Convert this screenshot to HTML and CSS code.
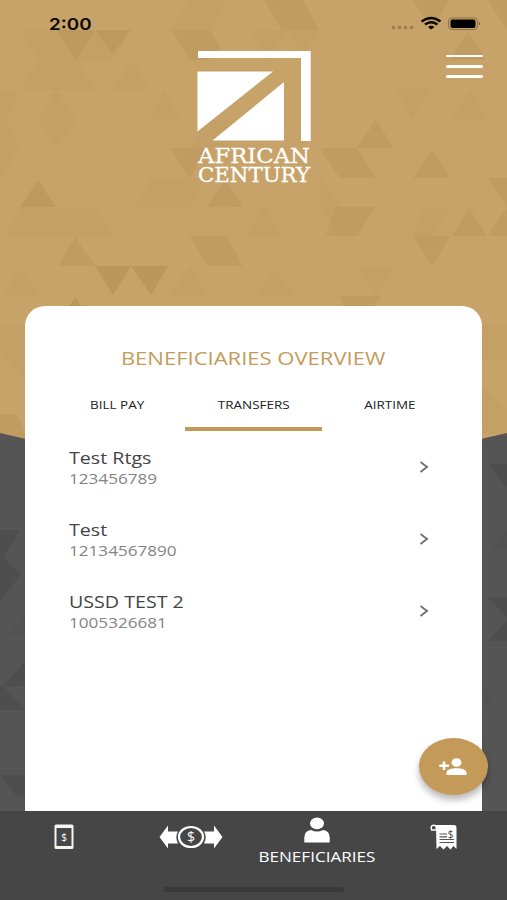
FILE: index.html
```html
<!DOCTYPE html>
<html lang="en">
<head>
<meta charset="utf-8">
<title>Beneficiaries</title>
<link rel="stylesheet" href="styles.css">
</head>
<body>
<div class="app">
  <svg class="backdrop" viewBox="0 0 507 900" aria-hidden="true">
    <path fill="#555" d="M0 0H507V900H0z"/>
    <path fill="#c7a269" d="M0 0H507V433Q253.500 495 0 433z"/>
    <g fill="#a8864a" fill-opacity=".09">
      <path d="M20 30H132L112 60H38zM38 60H76L95 90H20zM0 90H20L5 120L20 148L0 178z"/>
      <path d="M190 0H225L210 30H170zM38 120L56 90L76 120L57 148zM165 90L180 120H150z"/>
      <path d="M250 30H287L268 60zM290 30H318L303 58zM395 88H430L412 119zM470 90L487 120H453z"/>
      <path d="M20 207L38 182L56 207H95L113 236H5zM152 178H205L190 207H135z"/>
      <path d="M320 178L340 207H375L357 236H340L321 207zM425 207H452L432 236H413z"/>
      <path d="M20 268L40 296H3zM190 266L207 296H170zM275 268L294 296H257zM357 266H395L376 296z"/>
      <path d="M0 325H25V380L0 350zM482 325H507V360H482zM482 385L507 410V433H482z"/>
      <path d="M207 120H246L225 148H190zM264 207L282 236H246zM132 60L150 90H113z"/>
    </g>
    <g fill="#a8864a" fill-opacity=".22">
      <path d="M264 0H303L319 30H282zM413 0H450L432 29zM488 0H507V29z"/>
      <path d="M57 30H95L76 60zM95 30H130L113 54zM172 30H210L220 48L208 60H190zM468 32L486 60H450z"/>
      <path d="M376 120L394 148H357zM170 148H207L190 178zM320 148H357L375 178H340zM432 149L450 178H413z"/>
      <path d="M38 180L56 207H20zM225 179L243 207H207zM488 178H507V207zM469 208L487 236H452zM507 207V236H488z"/>
      <path d="M75 237L95 266H58zM190 236H226L243 266H207zM413 236H450L432 266z"/>
      <path d="M0 414H16L26 432V439L0 433zM340 296H382L372 308H345z"/>
    </g>
    <path fill="#a8864a" fill-opacity=".12" d="M335 207H375L358 236H325z"/>
    <path fill="#a8864a" fill-opacity=".4" d="M95 266H131L113 295zM131 266H168L151 295zM75 297L82 308H68z"/>
    <g fill="#484848" fill-opacity=".45">
      <path d="M0 530H20L4 557L21 574L0 602zM26 660V686H3zM3 686L25 710H0V686zM0 775H25V795L18 798z"/>
      <path d="M488 464H507V488zM488 597H507V618zM507 620V641H488z"/>
      <path fill-opacity=".2" d="M25 615V635H8zM507 530V550H490zM484 686L494 706H484z"/>
    </g>
  </svg>

  <header class="header">
    <div class="status">
      <span class="clock">2:00</span>
      <svg class="status-icons" viewBox="0 0 92 18" aria-hidden="true">
        <g fill="#9c7d4e"><circle cx="4.500" cy="12.500" r="1.800"/><circle cx="10.500" cy="12.500" r="1.800"/><circle cx="16.500" cy="12.500" r="1.800"/><circle cx="22.500" cy="12.500" r="1.800"/></g>
        <g fill="none" stroke="#0b0905" stroke-width="2.400">
          <path d="M32.500 6.500Q42.500-.6 51.500 6.500"/><path d="M36 9.500Q42 5 48.500 9.500"/>
        </g>
        <path fill="#0b0905" d="M39 12Q42 9.600 45.500 12L42.200 14.500z"/>
        <rect x="59.500" y="3" width="29" height="11.500" rx="3.500" fill="none" stroke="#8e7146"/>
        <rect x="61.500" y="4.500" width="25" height="8.500" rx="2"/>
        <path fill="#6b5432" d="M90 7Q92 8.700 90 10.500z"/>
      </svg>
    </div>
    <div class="brand-row">
      <div class="brand">
        <svg class="brand-mark" viewBox="0 0 114 90" aria-hidden="true">
          <path fill="#fff" d="M1 0H113.700V90H104V7H1zM.5 20.500H76L.5 80.500zM87 31V89.500H15.500z"/>
        </svg>
        <svg class="brand-name" viewBox="0 0 114 40">
          <text x="1" y="20" textLength="112" lengthAdjust="spacingAndGlyphs">AFRICAN</text>
          <text x="1" y="38.500" textLength="112" lengthAdjust="spacingAndGlyphs">CENTURY</text>
        </svg>
      </div>
      <div class="menu"><i></i><i></i><i></i></div>
    </div>
  </header>

  <main class="card">
    <h1 class="title"><span>BENEFICIARIES OVERVIEW</span></h1>
    <nav class="tabs">
      <a class="tab"><span>BILL PAY</span></a>
      <a class="tab active"><span>TRANSFERS</span></a>
      <a class="tab"><span>AIRTIME</span></a>
    </nav>
    <ul class="list">
      <li class="item">
        <div class="info"><span class="name">Test Rtgs</span><span class="number">123456789</span></div>
        <svg class="chevron" viewBox="0 0 10 12"><path d="M1.500 1L8 6L1.500 11"/></svg>
      </li>
      <li class="item">
        <div class="info"><span class="name">Test</span><span class="number">12134567890</span></div>
        <svg class="chevron" viewBox="0 0 10 12"><path d="M1.500 1L8 6L1.500 11"/></svg>
      </li>
      <li class="item">
        <div class="info"><span class="name">USSD TEST 2</span><span class="number">1005326681</span></div>
        <svg class="chevron" viewBox="0 0 10 12"><path d="M1.500 1L8 6L1.500 11"/></svg>
      </li>
    </ul>
  </main>

  <button class="fab" aria-label="Add beneficiary">
    <svg viewBox="0 0 28 18"><g fill="#fff"><ellipse cx="17.500" cy="4.500" rx="5" ry="4.300"/><path d="M7.500 17V14.500C7.500 8.800 27.500 8.800 27.500 14.500V17zM3.800 3.500H6.300V6.600H10V8.900H6.300V12H3.800V8.900H.3V6.600H3.800z"/></g></svg>
  </button>

  <footer class="bottom">
    <a class="nav-item">
      <svg class="icon-bill" viewBox="0 0 20 26"><path fill="#f4f4f4" fill-rule="evenodd" d="M2 .5H18Q19.500.5 19.500 2V23.500Q19.500 25 18 25H2Q.5 25 .5 23.500V2Q.5.5 2 .5zM2.500 4V22H17.500V4z"/><text x="10" y="16.500" font-size="10">$</text></svg>
    </a>
    <a class="nav-item">
      <svg class="icon-transfer" viewBox="0 0 64 24"><g fill="#fff"><path d="M.5 12L9 .5V6.500H19Q15.500 12 19 18.500H9V23.500zM63.500 12L55 .5V6.500H45Q48.500 12 45 18.500H55V23.500z"/></g><ellipse cx="32" cy="12" rx="12" ry="10" fill="none" stroke="#fff" stroke-width="2.200"/><text x="32" y="17" font-size="14">$</text></svg>
    </a>
    <a class="nav-item selected">
      <svg class="icon-person" viewBox="0 0 26 26"><g fill="#fff"><ellipse cx="13" cy="6.300" rx="7" ry="5.900"/><path d="M.3 25.500V20.500Q.5 13.500 7 13Q13 16 19 13Q25.500 13.500 25.700 20.500V25.500z"/></g></svg>
      <span>BENEFICIARIES</span>
    </a>
    <a class="nav-item">
      <svg class="icon-receipt" viewBox="0 0 28 26"><path fill="#fff" d="M6 1H24Q26.500 1 26.500 4V25L23.500 22L20.500 25.500L17 22L13.500 25.500L10 22L6.500 25z"/><path d="M6.500 6H1.700Q0 1.200 4 1.200Q6.500 1.200 6.500 6z" fill="none" stroke="#fff" stroke-width="1.500"/><path d="M9.500 10H17M9.500 12.800H17M9.500 15.500H24M9.500 18.500H24" stroke="#555" stroke-width="1.200"/><text class="ink" x="20.700" y="13.500" font-size="10">$</text></svg>
    </a>
    <div class="home-indicator"></div>
  </footer>
</div>
</body>
</html>
```

FILE: styles.css
```css
* { box-sizing: border-box; }
body { margin: 0; font-family: "Open Sans", "Noto Sans", sans-serif; }
.app {
  position: relative;
  display: flex;
  flex-direction: column;
  width: 507px;
  height: 900px;
  overflow: hidden;
}
.backdrop { position: absolute; inset: 0; width: 507px; height: 900px; }

.header { position: relative; height: 306px; }
.status {
  display: flex;
  justify-content: space-between;
  align-items: flex-start;
  height: 51px;
  padding: 14px 26px 0 49px;
}
.clock {
  font: 600 16.500px/20px Inter, sans-serif;
  transform: scaleX(1.14);
  transform-origin: left;
  color: #0b0905;
}
.status-icons { width: 92px; height: 18px; margin-top: 1px; }
.brand-row {
  display: grid;
  grid-template-columns: 1fr 114px 1fr;
  padding-right: 24px;
  padding-left: 24px;
}
.brand { grid-column: 2; display: flex; flex-direction: column; width: 114px; }
.brand-mark { width: 114px; height: 90px; }
.brand-name { width: 114px; height: 40px; margin-top: 2px; overflow: visible; }
.brand-name text {
  fill: #fff;
  stroke: #fff;
  stroke-width: .3;
  font: 19.500px "DejaVu Serif", serif;
}
.menu {
  justify-self: end;
  display: flex;
  flex-direction: column;
  gap: 7.500px;
  width: 37px;
  padding-top: 3.500px;
}
.menu i { height: 2.800px; border-radius: 2px; background: #fff; }

.card {
  position: relative;
  height: 505px;
  margin: 0 25px;
  padding: 38px 24px 0;
  border-radius: 20px 20px 0 0;
  background: #fff;
}
.title {
  margin: 0;
  text-align: center;
  font-size: 18.500px;
  font-weight: 400;
  line-height: 28px;
  color: #c59b5a;
}
.title span { display: inline-block; transform: scaleX(1.19); }
.tabs { display: grid; grid-template-columns: repeat(3, 1fr); margin-top: 12px; }
.tab {
  height: 47px;
  padding-top: 11px;
  border-bottom: 4px solid transparent;
  text-align: center;
  font-size: 11.500px;
  line-height: 20px;
  color: #222;
}
.tab span { display: inline-block; transform: scaleX(1.17); }
.tab.active { border-color: #c39a5a; }
.list { margin: 0; padding: 0 29px 0 20px; list-style: none; }
.item {
  display: flex;
  align-items: center;
  justify-content: space-between;
  height: 72.200px;
}
.info { display: flex; flex-direction: column; align-items: flex-start; padding-top: 1px; }
.name {
  font-size: 16.800px;
  line-height: 22px;
  color: #444;
  transform: scaleX(1.17);
  transform-origin: left;
}
.number {
  font-size: 14.500px;
  line-height: 20px;
  color: #858585;
  transform: scaleX(1.18);
  transform-origin: left;
}
.chevron { width: 10px; height: 12px; }
.chevron path { fill: none; stroke: #747474; stroke-width: 2; }

.fab {
  position: absolute;
  left: 418.500px;
  top: 738px;
  display: flex;
  align-items: center;
  justify-content: center;
  width: 69px;
  height: 57px;
  padding: 0;
  border: 0;
  border-radius: 50%;
  background: #c49a59;
  box-shadow: 0 5px 7px rgba(0, 0, 0, .28);
}
.fab svg { width: 28px; height: 18px; }

.bottom {
  position: relative;
  display: grid;
  grid-template-columns: repeat(4, 1fr);
  height: 89px;
  background: #464646;
}
.nav-item { display: flex; flex-direction: column; align-items: center; padding-top: 13px; }
.nav-item text { fill: #fff; text-anchor: middle; }
.nav-item .ink { fill: #444; }
.nav-item.selected { padding-top: 6px; }
.nav-item span {
  margin-top: 4px;
  font-size: 14px;
  line-height: 20px;
  color: #fff;
  transform: scaleX(1.22);
}
.icon-bill { width: 20px; height: 26px; margin-left: 2px; }
.icon-transfer { width: 64px; height: 24px; margin: 1px 0 0 1px; }
.icon-person { width: 26px; height: 26px; }
.icon-receipt { width: 28px; height: 26px; }
.home-indicator {
  position: absolute;
  left: 164px;
  bottom: 8px;
  width: 180px;
  height: 5px;
  border-radius: 2px;
  background: #393939;
}
```
